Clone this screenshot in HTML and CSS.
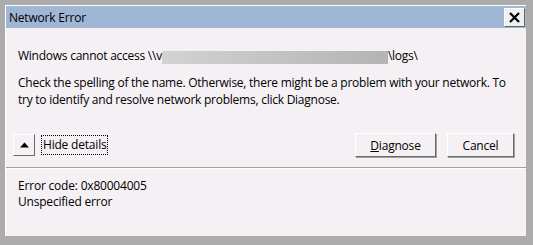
FILE: index.html
```html
<!DOCTYPE html>
<html lang="en">
<head>
<meta charset="UTF-8">
<title>Network Error</title>
<link rel="stylesheet" href="styles.css">
</head>
<body>
<div class="window">
    <div class="titlebar">
        <span class="title">Network Error</span>
        <button class="close" aria-label="Close">
            <svg width="11" height="11" viewBox="0 0 11 11"><path d="M1 1 L10 10 M10 1 L1 10" stroke="#000" stroke-width="2.2"/></svg>
        </button>
    </div>
    <div class="body">
        <p class="path">Windows cannot access \\v<span class="redact"></span>\logs\</p>
        <p class="msg">Check the spelling of the name. Otherwise, there might be a problem with your network. To try to identify and resolve network problems, click Diagnose.</p>
        <div class="actions">
            <button class="toggle" aria-label="Hide details">
                <svg width="9" height="6" viewBox="0 0 9 6"><path d="M0 5.5 L4.5 0.5 L9 5.5 Z" fill="#000"/></svg>
            </button>
            <span class="details-label">Hide details</span>
            <span class="spacer"></span>
            <button class="btn"><u>D</u>iagnose</button>
            <button class="btn">Cancel</button>
        </div>
    </div>
    <div class="details">
        <p>Error code: 0x80004005</p>
        <p>Unspecified error</p>
    </div>
</div>
</body>
</html>
```
FILE: styles.css
```css
/* dialog in the classic windows look */
body {
    margin: 0;
    width: 533px;
    height: 245px;
    background: #ababab;
    font-family: "Open Sans", "Noto Sans", sans-serif;
    font-size: 12px;
    color: #000;
    overflow: hidden;
}
.window {
    margin: 5px 0 0 5px;
    width: 520px;
    height: 230px;
    border-top: 1px solid #fff;
    border-left: 1px solid #fff;
    background: #f4f0f4;
    display: flex;
    flex-direction: column;
}
.titlebar {
    height: 22px;
    background: #9fb6d4;
    display: flex;
    align-items: center;
    padding-left: 3px;
}
.title {
    flex: 1;
    letter-spacing: -0.2px;
}
.close {
    width: 21px;
    height: 19px;
    margin-right: 1px;
    margin-top: 1px;
    padding: 0;
    border: 1px solid #fff;
    border-right-color: #666;
    border-bottom-color: #666;
    background: #f0f0f0;
    display: flex;
    align-items: center;
    justify-content: center;
}
.body {
    padding: 0 12px;
    border-bottom: 1px solid #a0a0a0;
    box-shadow: 0 1px 0 #fff;
}
p {
    margin: 0;
}
.path {
    margin-top: 19px;
    display: flex;
    align-items: center;
    letter-spacing: -0.25px;
}
.redact {
    display: inline-block;
    width: 226px;
    height: 13px;
    margin-top: 3px;
    background: linear-gradient(to right, #d2d2d2, #b4b4b4);
}
.msg {
    margin-top: 10px;
    line-height: 17px;
    letter-spacing: -0.25px;
}
.actions {
    margin-top: 25px;
    margin-bottom: 10px;
    display: flex;
    align-items: center;
    margin-left: -5px;
}
.toggle {
    width: 22px;
    height: 22px;
    padding: 0;
    border: 1px solid #fff;
    border-right-color: #6a6a6a;
    border-bottom-color: #6a6a6a;
    background: #f4f0f4;
    display: flex;
    align-items: center;
    justify-content: center;
}
.details-label {
    margin-left: 6px;
    padding: 0 1px 1px 1px;
    border: 1px dotted #000;
    letter-spacing: -0.2px;
}
.spacer {
    flex: 1;
}
.btn {
    font: inherit;
    letter-spacing: -0.2px;
    height: 24px;
    width: 81px;
    padding: 0;
    margin-left: 11px;
    border: 1px solid #fff;
    border-right-color: #6a6a6a;
    border-bottom-color: #6a6a6a;
    background: #f4f0f4;
    color: #000;
    box-shadow: 1px 1px 0 #a0a0a0;
}
.btn + .btn {
    width: 67px;
}
.details {
    padding: 10px 12px 0;
    line-height: 16px;
    letter-spacing: -0.2px;
}
```
